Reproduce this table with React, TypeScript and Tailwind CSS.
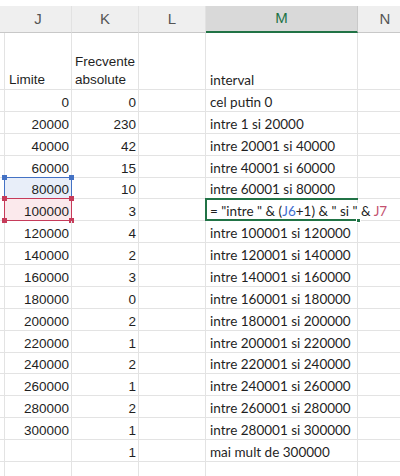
import React from 'react';

type Row = { j: string; k: string; m: string };

const rows: Row[] = [
  { j: '0', k: '0', m: 'cel putin 0' },
  { j: '20000', k: '230', m: 'intre 1 si 20000' },
  { j: '40000', k: '42', m: 'intre 20001 si 40000' },
  { j: '60000', k: '15', m: 'intre 40001 si 60000' },
  { j: '80000', k: '10', m: 'intre 60001 si 80000' },
  { j: '100000', k: '3', m: '' },
  { j: '120000', k: '4', m: 'intre 100001 si 120000' },
  { j: '140000', k: '2', m: 'intre 120001 si 140000' },
  { j: '160000', k: '3', m: 'intre 140001 si 160000' },
  { j: '180000', k: '0', m: 'intre 160001 si 180000' },
  { j: '200000', k: '2', m: 'intre 180001 si 200000' },
  { j: '220000', k: '1', m: 'intre 200001 si 220000' },
  { j: '240000', k: '2', m: 'intre 220001 si 240000' },
  { j: '260000', k: '1', m: 'intre 240001 si 260000' },
  { j: '280000', k: '2', m: 'intre 260001 si 280000' },
  { j: '300000', k: '1', m: 'intre 280001 si 300000' },
  { j: '', k: '1', m: 'mai mult de 300000' },
  { j: '', k: '', m: '' },
];

const arial = "font-['Liberation_Sans',Arial,sans-serif]";
const calibri = "font-['Lato','Open_Sans',sans-serif]";

const Handle = ({ pos, color }: { pos: string; color: string }) => (
  <div className={`absolute w-[5px] h-[5px] ${pos} ${color}`} />
);

const ColHeader = ({ label, width, active }: { label: string; width: string; active?: boolean }) => (
  <div
    className={`${width} h-full flex items-center justify-center border-r ${
      active
        ? 'bg-[#d9d9d9] text-[#217346] border-b-2 border-b-[#217346] border-r-[#c9c9c9]'
        : 'text-[#555] border-b border-b-[#c8c8c8] border-r-[#e2e2e2]'
    } text-[15px] ${arial}`}
  >
    {label}
  </div>
);

const App: React.FC = () => {
  return (
    <div className="w-[400px] h-[476px] overflow-hidden bg-white text-[#1f1f1f]">
      <div className="h-[6px] bg-white" />
      {/* column headers */}
      <div className="flex h-[27px] bg-[#efefef]">
        <div className="w-[5px] border-b border-b-[#c8c8c8]" />
        <ColHeader label="J" width="w-[67px]" />
        <ColHeader label="K" width="w-[67px]" />
        <ColHeader label="L" width="w-[67px]" />
        <ColHeader label="M" width="w-[152px]" active />
        <div className="w-[42px] h-full flex items-center justify-center pl-[12px] text-[15px] text-[#555] border-b border-b-[#c8c8c8] font-['Liberation_Sans',Arial,sans-serif]">
          N
        </div>
      </div>

      {/* title row */}
      <div className={`flex h-[57px] border-b border-[#e3e3e3] text-[13.5px] leading-[18px] ${arial}`}>
        <div className="w-[5px] border-r border-[#e3e3e3]" />
        <div className="w-[67px] border-r border-[#e3e3e3] flex items-end pl-[4px] pb-0">Limite</div>
        <div className="w-[67px] border-r border-[#e3e3e3] flex items-end pl-[3px] pb-0">
          Frecvente
          <br />
          absolute
        </div>
        <div className="w-[67px] border-r border-[#e3e3e3]" />
        <div className={`w-[152px] border-r border-[#e3e3e3] flex items-end pl-[4px] pb-0 text-[13.5px] ${calibri}`}>
          interval
        </div>
        <div className="w-[42px]" />
      </div>

      {rows.map((r, i) => {
        const blue = i === 4;
        const red = i === 5;
        const edit = i === 5;
        return (
          <div key={i} className="flex h-[21.875px] border-b border-[#e3e3e3]">
            <div className="w-[5px] border-r border-[#e3e3e3]" />
            <div
              className={`relative w-[67px] border-r border-[#e3e3e3] flex items-end justify-end pr-[2px] pb-[1px] text-[13.5px] leading-[15px] ${arial} ${
                blue ? 'bg-[#e8eef9]' : red ? 'bg-[#fbe9ec]' : ''
              }`}
            >
              {r.j}
              {blue && (
                <div className="absolute -top-[1px] -left-[1px] -right-[1px] -bottom-[1px] border-[1.5px] border-[#4472c4]">
                  <Handle pos="-top-[3px] -left-[3px]" color="bg-[#4472c4]" />
                  <Handle pos="-top-[3px] -right-[3px]" color="bg-[#4472c4]" />
                </div>
              )}
              {red && (
                <div className="absolute -top-[1px] -left-[1px] -right-[1px] -bottom-[1px] border-[1.5px] border-[#c63b5a]">
                  <Handle pos="-top-[3px] -left-[3px]" color="bg-[#c63b5a]" />
                  <Handle pos="-top-[3px] -right-[3px]" color="bg-[#c63b5a]" />
                  <Handle pos="-bottom-[3px] -left-[3px]" color="bg-[#c63b5a]" />
                  <Handle pos="-bottom-[3px] -right-[3px]" color="bg-[#c63b5a]" />
                </div>
              )}
            </div>
            <div className={`w-[67px] border-r border-[#e3e3e3] flex items-end justify-end pr-[2px] pb-[1px] text-[13.5px] leading-[15px] ${arial}`}>
              {r.k}
            </div>
            <div className="w-[67px] border-r border-[#e3e3e3]" />
            <div
              className={`relative w-[152px] border-r border-[#e3e3e3] flex items-end pl-[4px] pb-[1px] text-[13.5px] leading-[16px] whitespace-nowrap ${calibri} ${
                edit ? 'overflow-visible z-10' : ''
              }`}
            >
              {edit ? (
                <>
                  <div className="absolute -top-[1px] -left-[1px] w-[153px] -bottom-[1px] border-t-2 border-l-2 border-b-2 border-[#217346]">
                    <div className="absolute -bottom-[4px] -right-[3px] w-[5px] h-[5px] bg-[#217346] border border-white" />
                  </div>
                  <span className="relative bg-white pr-[4px]">
                    = "intre " &amp; (<span className="text-[#3f6fd1]">J6</span>+1) &amp; " si " &amp;{' '}
                    <span className="text-[#c4506f]">J7</span>
                  </span>
                </>
              ) : (
                r.m
              )}
            </div>
            <div className="w-[42px]" />
          </div>
        );
      })}
    </div>
  );
};

export default App;
